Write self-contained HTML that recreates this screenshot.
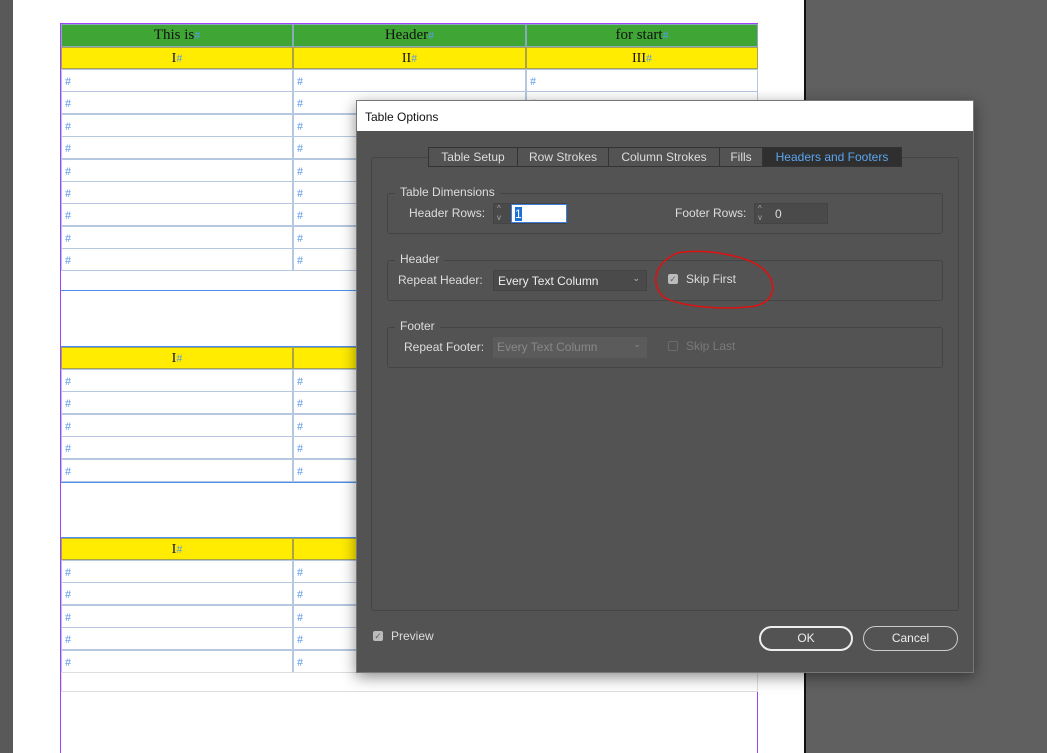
<!DOCTYPE html>
<html><head><meta charset="utf-8"><style>
*{margin:0;padding:0;box-sizing:border-box}
body{width:1047px;height:753px;overflow:hidden;background:#606060;position:relative;font-family:"Liberation Sans",sans-serif}
.abs{position:absolute}
.page{left:13px;top:0;width:793px;height:753px;background:#fff;border-right:2px solid #111}
.cell{position:absolute;border:1px solid #b5c8e0;background:#fff;color:#5a9aea;font-size:12px;padding:4px 0 0 3px;font-family:"Liberation Serif",serif}
.g{background:#3fa535;border-color:#8ab;color:#111;font-size:15px;text-align:center;padding:2px 0 0}
.y{background:#ffec00;border-color:#a9a34a;color:#111;font-size:14px;text-align:center;padding:3px 0 0}
.h{color:#5a9aea;font-size:12px}
.dlg{left:356px;top:100px;width:618px;height:573px;background:#535353;border:1px solid #777;box-shadow:0 4px 14px rgba(0,0,0,.45)}
.t{color:#ddd;font-size:12px;position:absolute;white-space:nowrap}
.box{position:absolute;border:1px solid #444;border-radius:3px}
.btn{position:absolute;border:2px solid #eee;border-radius:13px;color:#eee;font-size:12px;text-align:center;line-height:21px}
.tab{text-align:center;line-height:18px;border-right:1px solid #333}
</style></head><body>
<div class="abs" style="left:0;top:0;width:13px;height:753px;background:#595959"></div>
<div class="abs page"></div>
<div class="abs" style="left:60px;top:23px;width:1px;height:730px;background:#a040ff"></div>
<div class="abs" style="left:757px;top:23px;width:1px;height:730px;background:#a040ff"></div>
<div class="abs" style="left:60px;top:23px;width:698px;height:1px;background:#a040ff"></div>

<div class="cell g" style="left:61px;top:24px;width:232px;height:23px">This is<span class="h">#</span></div>
<div class="cell g" style="left:293px;top:24px;width:233px;height:23px">Header<span class="h">#</span></div>
<div class="cell g" style="left:526px;top:24px;width:232px;height:23px">for start<span class="h">#</span></div>
<div class="cell y" style="left:61px;top:47px;width:232px;height:22px">I<span class="h">#</span></div>
<div class="cell y" style="left:293px;top:47px;width:233px;height:22px">II<span class="h">#</span></div>
<div class="cell y" style="left:526px;top:47px;width:232px;height:22px">III<span class="h">#</span></div>
<div class="abs" style="left:61px;top:290px;width:697px;height:1px;background:#4a90f0"></div>
<div class="abs" style="left:61px;top:346px;width:697px;height:1px;background:#4a90f0"></div>
<div class="cell y" style="left:61px;top:347px;width:232px;height:22px">I<span class="h">#</span></div>
<div class="cell y" style="left:293px;top:347px;width:233px;height:22px"></div>
<div class="abs" style="left:61px;top:482px;width:697px;height:1px;background:#4a90f0"></div>
<div class="abs" style="left:61px;top:537px;width:697px;height:1px;background:#4a90f0"></div>
<div class="cell y" style="left:61px;top:538px;width:232px;height:22px">I<span class="h">#</span></div>
<div class="cell y" style="left:293px;top:538px;width:233px;height:22px"></div>
<div class="abs" style="left:61px;top:691px;width:697px;height:1px;background:#4a90f0"></div>
<script>
function rows(top,n,cols){var h='';for(var i=0;i<n;i++){var y=top+i*22.4;cols.forEach(function(c){h+='<div class="cell" style="left:'+c[0]+'px;top:'+y+'px;width:'+c[1]+'px;height:23px">#</div>'})}document.write(h)}
rows(69,9,[[61,232],[293,233],[526,232]]);
rows(369,5,[[61,232],[293,233]]);
rows(560,5,[[61,232],[293,233]]);
</script>
<div class="cell" style="left:61px;top:672px;width:697px;height:20px;border-color:#ddd"></div>

<div class="abs dlg">
 <div class="abs" style="left:0;top:0;width:616px;height:30px;background:#fff;color:#111;font-size:12px;padding:9px 0 0 8px">Table Options</div>
 <div class="box" style="left:14px;top:56px;width:588px;height:454px"></div>
 <div class="abs" style="left:71px;top:46px;width:474px;height:20px;background:#535353;border:1px solid #333;display:flex;font-size:12px;color:#ddd">
  <div class="tab" style="width:89px">Table Setup</div>
  <div class="tab" style="width:91px">Row Strokes</div>
  <div class="tab" style="width:111px">Column Strokes</div>
  <div class="tab" style="width:43px">Fills</div>
  <div class="tab" style="width:138px;border:0;background:#2f2f2f;color:#5aa5f0">Headers and Footers</div>
 </div>
 <div class="box" style="left:30px;top:92px;width:556px;height:41px"></div>
 <div class="t" style="left:38px;top:84px;background:#535353;padding:0 5px">Table Dimensions</div>
 <div class="t" style="left:52px;top:105px">Header Rows:</div>
 <div class="abs" style="left:136px;top:102px;width:74px;height:21px;border:1px solid #444;background:#4a4a4a"><div style="position:absolute;left:17px;top:0;width:56px;height:19px;background:#fff;border:1px solid #3b7dd8"><span style="background:#1a6fd8;color:#fff;font-size:12px;margin-left:3px">1</span></div><span style="position:absolute;left:3px;top:0;color:#aaa;font-size:8px;line-height:9px">^<br>v</span></div>
 <div class="t" style="left:318px;top:105px">Footer Rows:</div>
 <div class="abs" style="left:397px;top:102px;width:74px;height:21px;border:1px solid #444;background:#4a4a4a"><span style="position:absolute;left:20px;top:3px;color:#ddd;font-size:12px">0</span><span style="position:absolute;left:3px;top:0;color:#aaa;font-size:8px;line-height:9px">^<br>v</span></div>
 <div class="box" style="left:30px;top:159px;width:556px;height:41px"></div>
 <div class="t" style="left:38px;top:151px;background:#535353;padding:0 5px">Header</div>
 <div class="t" style="left:41px;top:172px">Repeat Header:</div>
 <div class="abs" style="left:136px;top:169px;width:154px;height:21px;border:1px solid #444;background:#4a4a4a;color:#eee;font-size:12px;padding:3px 4px">Every Text Column<span style="position:absolute;right:6px;top:2px;font-size:9px;color:#bbb">⌄</span></div>
 <div class="abs" style="left:311px;top:173px;width:10px;height:10px;background:#bbb;border-radius:2px;color:#666;font-size:9px;line-height:10px;text-align:center">✓</div>
 <div class="t" style="left:329px;top:171px">Skip First</div>
 <svg class="abs" style="left:290px;top:145px" width="140" height="65"><path d="M30 7 C60 2 100 10 115 22 C132 35 130 60 100 61 C70 64 35 60 18 52 C5 42 3 20 30 7" fill="none" stroke="#e01010" stroke-width="1.5"/></svg>
 <div class="box" style="left:30px;top:226px;width:556px;height:41px"></div>
 <div class="t" style="left:38px;top:218px;background:#535353;padding:0 5px">Footer</div>
 <div class="t" style="left:47px;top:239px">Repeat Footer:</div>
 <div class="abs" style="left:136px;top:236px;width:154px;height:21px;background:#5b5b5b;color:#888;font-size:12px;padding:3px 4px">Every Text Column<span style="position:absolute;right:6px;top:2px;font-size:9px">⌄</span></div>
 <div class="abs" style="left:311px;top:240px;width:10px;height:10px;border:1px solid #6c6c6c;border-radius:2px"></div>
 <div class="t" style="left:329px;top:238px;color:#7a7a7a">Skip Last</div>
 <div class="abs" style="left:16px;top:530px;width:10px;height:10px;background:#bbb;border-radius:2px;color:#666;font-size:9px;line-height:10px;text-align:center">✓</div>
 <div class="t" style="left:34px;top:528px">Preview</div>
 <div class="btn" style="left:402px;top:525px;width:94px;height:25px">OK</div>
 <div class="btn" style="left:506px;top:525px;width:95px;height:25px;border-width:1px;border-color:#ccc;line-height:23px">Cancel</div>
</div>
</body></html>
